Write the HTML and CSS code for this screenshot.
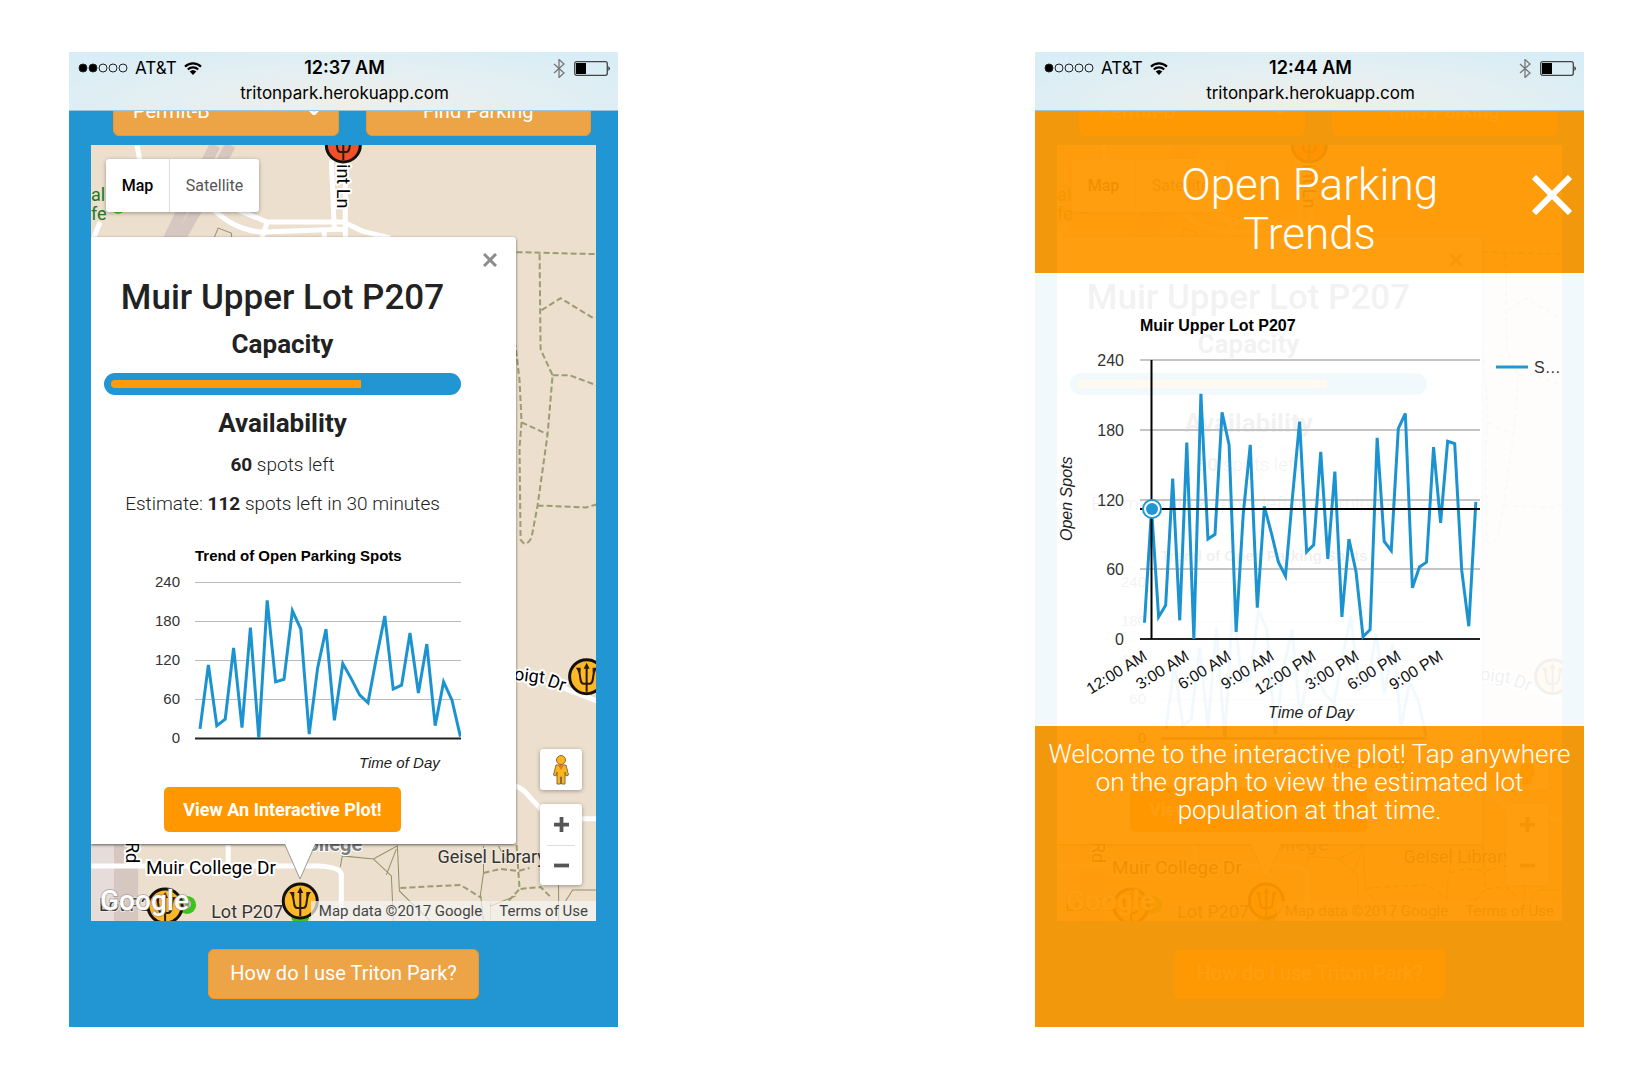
FILE: index.html
```html
<!DOCTYPE html>
<html lang="en">
<head>
<meta charset="utf-8">
<title>Triton Park</title>
<link rel="stylesheet" href="styles.css">
</head>
<body>
<svg class="sprite" aria-hidden="true">
  <symbol id="trident" viewBox="-20 -20 40 40">
    <circle r="17" fill="currentColor" stroke="#14110c" stroke-width="3"/>
    <path d="M0 15V-11M-9 -8C-5 -3 -8 7 -3 7H3C8 7 5 -3 9 -8" fill="none" stroke="#2a1c08" stroke-width="2"/>
    <path d="M0 -14L-3 -8H3ZM-11 -9L-6 -9L-6 -4ZM11 -9L6 -9L6 -4Z" fill="#2a1c08"/>
  </symbol>
  <symbol id="wifi" viewBox="0 0 18 13">
    <path d="M1 4.600A11.500 11.500 0 0 1 17 4.600M3.800 7.500A7.500 7.500 0 0 1 14.200 7.500" fill="none" stroke="#000" stroke-width="2.200"/>
    <path d="M9 13L5.700 9.600A4.800 4.800 0 0 1 12.300 9.600Z"/>
  </symbol>
  <symbol id="bluetooth" viewBox="0 0 12 19">
    <path d="M1 5L11 14L6 18.500V.500L11 5L1 14" fill="none" stroke="#777" stroke-width="1.300"/>
  </symbol>
  <symbol id="battery" viewBox="0 0 37 15">
    <rect x=".700" y=".700" width="32.600" height="13.600" rx="2" fill="none" stroke="#444" stroke-width="1.300"/>
    <rect x="2" y="2" width="10" height="11"/>
    <path d="M34.500 5Q37 7.500 34.500 10Z"/>
  </symbol>
</svg>

<main class="board">
  <section class="phone">
    <header class="status">
      <div class="status-row">
        <span class="carrier">
          <svg class="dots" viewBox="0 0 50 10"><g stroke="#222"><circle cx="5" cy="5" r="4"/><circle cx="15" cy="5" r="4"/><g fill="none"><circle cx="25" cy="5" r="4"/><circle cx="35" cy="5" r="4"/><circle cx="45" cy="5" r="4"/></g></g></svg>
          AT&amp;T
          <svg class="wifi"><use href="#wifi"/></svg>
        </span>
        <time class="clock">12:37 AM</time>
        <span class="power"><svg class="bluetooth"><use href="#bluetooth"/></svg><svg class="battery"><use href="#battery"/></svg></span>
      </div>
      <div class="address">tritonpark.herokuapp.com</div>
    </header>

    <div class="page" id="page">
      <div class="search">
        <div class="permit">
          <select class="soft-button" aria-label="Permit"><option>Permit-B</option></select>
          <svg class="chevron" viewBox="0 0 10 7"><path d="M0 1L5 6L10 1" fill="none" stroke="#fff" stroke-width="3"/></svg>
        </div>
        <button class="soft-button">Find Parking</button>
      </div>

      <div class="map">
        <svg class="map-canvas" viewBox="91 145 505 775" preserveAspectRatio="xMinYMin slice">
          <g fill="none">
            <g stroke="#d6c7c0">
              <path d="M215 145L187 200L168 240" stroke-width="11"/>
              <path d="M230 145L202 200L179 240" stroke-width="11"/>
            </g>
            <path d="M91 844H114V920H91Z" fill="#e6ddda"/>
            <path d="M114 844H138V920H114Z" fill="#d6c7c0"/>
            <g stroke="#fff" stroke-width="5">
              <path d="M137 145L140 162M214 210Q236 231 264 232L345 229M238 210L267 222H343L362 231L390 238M331 160L334 230M345 160V238M267 222L261 240M324 230V240M100 222L93 240"/>
              <path d="M515 785Q523 788 529 796L541 809M580 818H596M562 687L598 701M91 865H318Q341 866 341 874V920M228 844V865"/>
            </g>
            <g stroke="#8f9166" stroke-width="1">
              <path d="M213 240L218 228L231 233L232 240M340 866L342 855L373 858L397 845L399 890L409 900L430 920M373 858L391 875L393 920M396 848L386 874M483 845V872L480 893L483 920M498 845L506 860M558 880V920M565 900L572 889H596M490 905L515 895"/>
            </g>
            <g stroke="#9a9c72" stroke-width="2" stroke-dasharray="6 3">
              <path d="M516 252L596 254M539 254L540 349L552 375L547 434L537 505L531 537Q525 548 520 539L519 447L521 422L519 380L515 345M541 310L560 298L591 317H596M552 375H569L596 385M521 422L547 434M537 505L585 507L596 504"/>
              <path d="M400 887L460 884L481 897M483 872L500 868L518 870L529 867M516 844L519 888L508 900M520 888L540 886L551 897"/>
            </g>
          </g>
          <circle cx="118" cy="208" r="6" fill="#4bd02a"/>
          <g class="map-text">
            <text x="91" y="201" class="park">al</text>
            <text x="91" y="220" class="park">fe</text>
            <text transform="translate(337 164) rotate(90)">int Ln</text>
            <text transform="translate(513 679) rotate(7)">oigt</text>
            <text transform="translate(546 685) rotate(19)">Dr</text>
            <text transform="translate(126 841) rotate(90)">Rd</text>
            <text x="146" y="873" class="street">Muir College Dr</text>
            <text x="362" y="850" text-anchor="end" class="district">College</text>
            <text x="437" y="862" class="place">Geisel Library</text>
            <text x="99" y="910" class="place">Lot P2</text>
            <text x="211" y="917" class="place">Lot P207</text>
          </g>
          <g fill="#3cc31c"><circle cx="187" cy="904" r="9"/><circle cx="300" cy="915" r="9"/></g>
          <circle cx="187" cy="903" r="3" fill="none" stroke="#d9a9d8" stroke-width="2"/>
          <use href="#trident" x="323" y="125" width="40" height="40" color="#f1502a"/>
          <use href="#trident" x="566" y="656" width="40" height="40" color="#fcb827"/>
          <use href="#trident" x="145" y="885" width="40" height="40" color="#fcb827"/>
          <use href="#trident" x="280" y="880" width="40" height="40" color="#fcb827"/>
          <text x="100" y="909" class="brand">Google</text>
        </svg>

        <div class="map-type"><button class="current">Map</button><button>Satellite</button></div>

        <article class="info">
          <button class="info-close" aria-label="Close"><svg viewBox="0 0 14 14"><path d="M1 1L13 13M13 1L1 13" stroke="#8c8c8c" stroke-width="3"/></svg></button>
          <h2>Muir Upper Lot P207</h2>
          <h3>Capacity</h3>
          <div class="meter"><div class="meter-fill" style="width:73%"></div></div>
          <h3>Availability</h3>
          <p><b>60</b> spots left</p>
          <p>Estimate: <b>112</b> spots left in 30 minutes</p>
          <svg class="trend" viewBox="0 0 357 240">
            <text x="91" y="21" class="chart-title">Trend of Open Parking Spots</text>
            <g stroke="#bbb"><path d="M91 42.500H357M91 81.500H357M91 120.500H357M91 159.500H357"/></g>
            <g class="chart-label" text-anchor="end"><text x="76" y="47">240</text><text x="76" y="86">180</text><text x="76" y="125">120</text><text x="76" y="164">60</text><text x="76" y="203">0</text></g>
            <path d="M91 198.500H357" stroke="#222" stroke-width="2"/>
            <polyline class="series" data-count="32" data-x="96" data-step="8.400" data-zero="198" data-scale=".6525"/>
            <text x="255" y="228" class="chart-axis">Time of Day</text>
          </svg>
          <button class="plot-button">View An Interactive Plot!</button>
          <svg class="tail" viewBox="0 0 30 36"><path d="M0 0L15 35L30 0Z" fill="#fff"/><path d="M0 1L15 35L30 1" fill="none" stroke="#999"/></svg>
        </article>

        <div class="map-tools">
          <button aria-label="Street View"><svg class="pegman" viewBox="0 0 16 30"><g fill="#fbb41b" stroke="#8a6a3a"><path d="M3 10H13L15.500 20L13 21L12 17V29H8.500V22H7.500V29H4V17L3 21L.500 20Z"/><circle cx="8" cy="5" r="4.500"/></g><path d="M5 10H11L8 15Z" fill="#e5762a"/></svg></button>
          <div class="zoom">
            <button aria-label="Zoom in"><svg viewBox="0 0 16 16"><path d="M0 8H16M8 0V16" stroke="#555" stroke-width="4"/></svg></button>
            <button aria-label="Zoom out"><svg viewBox="0 0 16 16"><path d="M0 8H16" stroke="#555" stroke-width="4"/></svg></button>
          </div>
        </div>
        <div class="credits"><span>Map data ©2017 Google</span><a href="#terms">Terms of Use</a></div>
      </div>

      <button class="soft-button help">How do I use Triton Park?</button>
    </div>
  </section>

  <section class="phone">
    <header class="status">
      <div class="status-row">
        <span class="carrier">
          <svg class="dots" viewBox="0 0 50 10"><g stroke="#222"><circle cx="5" cy="5" r="4"/><g fill="none"><circle cx="15" cy="5" r="4"/><circle cx="25" cy="5" r="4"/><circle cx="35" cy="5" r="4"/><circle cx="45" cy="5" r="4"/></g></g></svg>
          AT&amp;T
          <svg class="wifi"><use href="#wifi"/></svg>
        </span>
        <time class="clock">12:44 AM</time>
        <span class="power"><svg class="bluetooth"><use href="#bluetooth"/></svg><svg class="battery"><use href="#battery"/></svg></span>
      </div>
      <div class="address">tritonpark.herokuapp.com</div>
    </header>
    <div id="backdrop" inert></div>

    <div class="overlay" role="dialog" aria-label="Open Parking Trends">
      <div class="overlay-head">
        <h1>Open Parking Trends</h1>
        <button class="overlay-close" aria-label="Close"><svg viewBox="0 0 40 40"><path d="M2 2L38 38M38 2L2 38" stroke="#fff" stroke-width="6"/></svg></button>
      </div>
      <div class="overlay-plot">
        <svg class="plot" viewBox="0 0 549 453">
          <text x="105" y="58" class="chart-title">Muir Upper Lot P207</text>
          <path d="M105 87H445M105 157H445M105 227H445M105 296H445" stroke="#c4c4c4" stroke-width="2"/>
          <g class="chart-label" text-anchor="end"><text x="89" y="93">240</text><text x="89" y="163">180</text><text x="89" y="233">120</text><text x="89" y="302">60</text><text x="89" y="372">0</text></g>
          <path d="M105 366H445" stroke="#222" stroke-width="2"/>
          <polyline class="series" data-count="48" data-x="109.500" data-step="7.050" data-zero="366" data-scale="1.1625"/>
          <path d="M105 236H445M116.500 87V366" stroke="#000" stroke-width="2"/>
          <circle cx="117" cy="236" r="9" fill="#fff" stroke="#2196d3" stroke-width="2"/><circle cx="117" cy="236" r="6" fill="#2196d3"/>
          <path d="M461 94H493" stroke="#2196d3" stroke-width="3"/>
          <text x="499" y="100" class="chart-label">S…</text>
          <g class="chart-label ticks" text-anchor="end">
            <text transform="translate(113 386) rotate(-32)">12:00 AM</text>
            <text transform="translate(155 386) rotate(-32)">3:00 AM</text>
            <text transform="translate(197 386) rotate(-32)">6:00 AM</text>
            <text transform="translate(240 386) rotate(-32)">9:00 AM</text>
            <text transform="translate(282 386) rotate(-32)">12:00 PM</text>
            <text transform="translate(325 386) rotate(-32)">3:00 PM</text>
            <text transform="translate(367 386) rotate(-32)">6:00 PM</text>
            <text transform="translate(409 386) rotate(-32)">9:00 PM</text>
          </g>
          <text transform="translate(37 268) rotate(-90)" class="chart-axis">Open Spots</text>
          <text x="233" y="445" class="chart-axis">Time of Day</text>
        </svg>
      </div>
      <p class="overlay-note">Welcome to the interactive plot! Tap anywhere on the graph to view the estimated lot population at that time.</p>
    </div>
  </section>
</main>
<script src="app.js"></script>
</body>
</html>
```

FILE: styles.css
```css
* { box-sizing: border-box; }
body { margin: 0; background: #fff; font-family: Roboto, sans-serif; color: #222; }
button, select { font: inherit; color: inherit; border: 0; margin: 0; padding: 0; background: none; }
svg { display: block; }
h1, h2, h3, p { margin: 0; }
.sprite { position: absolute; width: 0; height: 0; }

.board { display: grid; grid-template-columns: 1fr 1fr; column-gap: 417px; padding: 52px 59px 52px 69px; }
.phone { position: relative; overflow: hidden; background: #2196d3; }

.status { position: absolute; z-index: 3; top: 0; left: 0; right: 0; height: 59px; padding: 4px 7px 0 9px; background: radial-gradient(ellipse at 50% 90%, #efefe8 0%, #e4eff2 45%, #d8edf6 90%); border-bottom: 1px solid #9cc3d6; color: #000; font-family: Inter, sans-serif; font-size: 17px; line-height: 24px; }
.status-row { display: grid; grid-template-columns: 1fr auto 1fr; align-items: center; }
.carrier { display: flex; align-items: center; gap: 7px; }
.dots { width: 50px; height: 10px; }
.wifi { width: 18px; height: 13px; }
.clock { font-size: 18px; font-weight: 600; }
.power { display: flex; align-items: center; justify-content: flex-end; gap: 9px; }
.bluetooth { width: 12px; height: 19px; }
.battery { width: 37px; height: 15px; }
.address { text-align: center; line-height: 26px; }

.page { padding: 34px 0 28px; background: #2196d3; }
.search { display: grid; grid-template-columns: 1fr 1fr; column-gap: 27px; padding: 0 27px 0 44px; }
.permit { position: relative; display: grid; }
.chevron { position: absolute; right: 20px; top: 22px; width: 10px; height: 7px; }
.soft-button { height: 50px; border: 1px solid #f5971c; border-radius: 6px; background: #eda446; color: #fff; font-size: 20px; }
select.soft-button { appearance: none; padding: 0 19px; }
.help { display: block; width: 271px; margin: 28px auto 0; padding-bottom: 2px; }

.map { position: relative; height: 776px; margin: 9px 22px 0; overflow: hidden; background: #ecdfcd; }
.map-canvas { width: 100%; height: 100%; }
.map-text { font-size: 18px; fill: #000; stroke: #fff; stroke-width: 4px; stroke-linejoin: round; paint-order: stroke; }
.map-text .street { font-size: 19px; }
.map-text .park { fill: #22771f; stroke: none; }
.map-text .place { fill: #333; stroke: #f3ebdf; stroke-width: 2px; }
.map-text .district { fill: #7d7f80; stroke-width: 2px; font-size: 20px; font-weight: 700; }
.brand { font-size: 28px; font-weight: 500; fill: #fff; stroke: #8888; stroke-width: 2px; paint-order: stroke; }

.map-type { position: absolute; left: 15px; top: 14px; display: grid; grid-template-columns: 64px 89px; height: 53px; border-radius: 3px; background: #fff; box-shadow: 0 1px 4px #0005; font-size: 16px; color: #555; }
.map-type .current { font-weight: 500; color: #000; border-right: 1px solid #ddd; }

.info { position: absolute; left: 0; top: 92px; width: 425px; padding: 40px 55px 12px 13px; border-radius: 0 3px 3px 0; background: #fff; box-shadow: 0 1px 3px #0009; text-align: center; }
.info h2 { font-size: 35px; line-height: 42px; font-weight: 500; white-space: nowrap; }
.info h3 { font-size: 26px; line-height: 30px; font-weight: 700; margin-top: 10px; }
.info p { font-size: 19px; line-height: 24px; font-weight: 300; margin-top: 15px; }
.info b { font-weight: 700; }
.info-close { position: absolute; right: 19px; top: 16px; width: 14px; height: 14px; }
.meter { height: 22px; margin: 14px 0 13px; padding: 7px; border-radius: 11px; background: #2196d3; }
.meter-fill { height: 8px; border-radius: 4px 0 0 4px; background: #ff9b0a; }
.trend { width: 100%; margin-top: 24px; }
.plot-button { width: 237px; height: 45px; margin-top: 7px; border-radius: 5px; background: #ff9800; color: #fff; font-size: 18px; font-weight: 700; }
.tail { position: absolute; left: 194px; top: 100%; width: 30px; height: 36px; }

.map-tools { position: absolute; right: 14px; top: 604px; display: grid; gap: 14px; width: 42px; }
.map-tools button { display: grid; place-items: center; width: 100%; height: 41px; }
.map-tools > button, .zoom { border-radius: 3px; background: #fff; box-shadow: 0 1px 4px #0005; }
.pegman { width: 16px; height: 30px; }
.zoom button + button { height: 40px; background: linear-gradient(#ddd, #ddd) center top / 28px 1px no-repeat; }
.zoom svg { width: 15px; height: 15px; }
.credits { position: absolute; right: 0; bottom: 0; display: flex; gap: 1px; font-size: 15px; line-height: 20px; color: #444; }
.credits > * { padding: 0 8px; background: #f5f5f5b3; color: inherit; text-decoration: none; }

.series { fill: none; stroke: #1c93d1; stroke-width: 3; }
.chart-title, .chart-label, .chart-axis { font-family: "Liberation Sans", sans-serif; fill: #000; }
.chart-title { font-weight: 700; }
.chart-label { fill: #333; }
.chart-axis { font-style: italic; fill: #222; }
.trend { font-size: 15px; }
.plot { width: 100%; font-size: 16px; }
.plot .ticks { fill: #111; }

.overlay { position: absolute; z-index: 2; inset: 59px 0 0; display: flex; flex-direction: column; }
.overlay-head { position: relative; padding: 50px 120px 14px; background: #ff9800f0; }
.overlay h1 { font-size: 44px; line-height: 49px; font-weight: 300; color: #fff; text-align: center; }
.overlay-close { position: absolute; right: 12px; top: 64px; width: 40px; height: 40px; }
.overlay-plot { background: #fffffff0; }
.overlay-note { flex: 1; padding: 14px 8px; background: #ff9800f0; color: #fff; font-size: 26px; line-height: 28px; font-weight: 300; text-align: center; }
```

FILE: app.js
```javascript
// Half-hourly open spots for Muir Upper Lot P207.
const spots = [14, 112, 19, 29, 138, 16, 169, 0, 211, 86, 90, 195, 167, 6, 107, 167,
  27, 114, 91, 66, 54, 123, 187, 75, 81, 161, 69, 144, 19, 86, 58, 2,
  8, 173, 84, 76, 181, 194, 44, 62, 66, 165, 100, 170, 168, 59, 11, 118];

document.querySelectorAll('.series').forEach((line) => {
  const d = line.dataset;
  line.setAttribute('points', spots.slice(0, +d.count)
    .map((v, i) => `${+d.x + i * d.step},${d.zero - v * d.scale}`).join(' '));
});

// The dialog opens over the same map page.
const copy = document.getElementById('page').cloneNode(true);
copy.removeAttribute('id');
document.getElementById('backdrop').append(copy);
```
